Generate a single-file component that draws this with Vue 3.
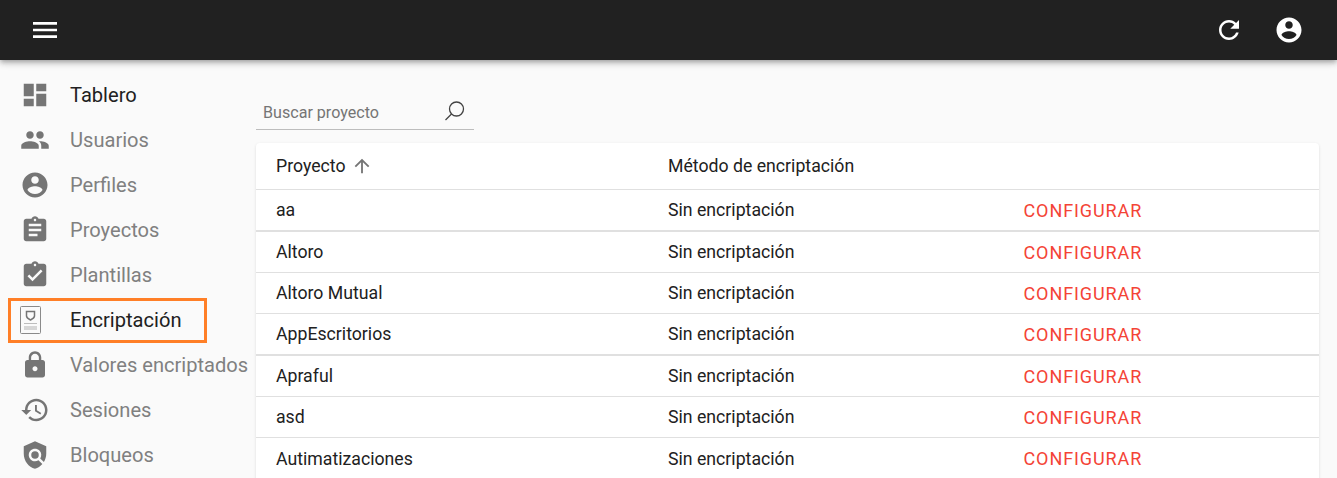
<script setup>
const menuItems = [
  { label: 'Tablero', active: true, paths: ['M3 13h8V3H3v10zm0 8h8v-6H3v6zm10 0h8V11h-8v10zm0-18v6h8V3h-8z'] },
  { label: 'Usuarios', paths: ['M16 11c1.66 0 2.99-1.34 2.99-3S17.66 5 16 5c-1.66 0-3 1.34-3 3s1.34 3 3 3zm-8 0c1.66 0 2.99-1.34 2.99-3S9.66 5 8 5C6.34 5 5 6.34 5 8s1.34 3 3 3zm0 2c-2.33 0-7 1.17-7 3.5V19h14v-2.5c0-2.33-4.67-3.5-7-3.5zm8 0c-.29 0-.62.02-.97.05 1.16.84 1.97 1.97 1.97 3.45V19h6v-2.5c0-2.33-4.67-3.5-7-3.5z'] },
  { label: 'Perfiles', paths: ['M12 2C6.48 2 2 6.48 2 12s4.48 10 10 10 10-4.48 10-10S17.52 2 12 2zm0 3c1.66 0 3 1.34 3 3s-1.34 3-3 3-3-1.34-3-3 1.34-3 3-3zm0 14.2c-2.5 0-4.71-1.28-6-3.22.03-1.99 4-3.08 6-3.08 1.99 0 5.97 1.09 6 3.08-1.29 1.94-3.5 3.22-6 3.22z'] },
  { label: 'Proyectos', paths: ['M19 3h-4.18C14.4 1.84 13.3 1 12 1c-1.3 0-2.4.84-2.82 2H5c-1.1 0-2 .9-2 2v14c0 1.1.9 2 2 2h14c1.1 0 2-.9 2-2V5c0-1.1-.9-2-2-2zm-7 0c.55 0 1 .45 1 1s-.45 1-1 1-1-.45-1-1 .45-1 1-1zm2 14H7v-2h7v2zm3-4H7v-2h10v2zm0-4H7V7h10v2z'] },
  { label: 'Plantillas', paths: ['M19 3h-4.18C14.4 1.84 13.3 1 12 1c-1.3 0-2.4.84-2.82 2H5c-1.1 0-2 .9-2 2v14c0 1.1.9 2 2 2h14c1.1 0 2-.9 2-2V5c0-1.1-.9-2-2-2zm-7 0c.55 0 1 .45 1 1s-.45 1-1 1-1-.45-1-1 .45-1 1-1zm-2 14l-4-4 1.41-1.41L10 14.17l6.59-6.59L18 9l-8 8z'] },
  { label: 'Encriptación', active: true, highlighted: true, custom: true },
  { label: 'Valores encriptados', paths: ['M18 8h-1V6c0-2.76-2.24-5-5-5S7 3.24 7 6v2H6c-1.1 0-2 .9-2 2v10c0 1.1.9 2 2 2h12c1.1 0 2-.9 2-2V10c0-1.1-.9-2-2-2zm-6 9c-1.1 0-2-.9-2-2s.9-2 2-2 2 .9 2 2-.9 2-2 2zm3.1-9H8.9V6c0-1.71 1.39-3.1 3.1-3.1 1.71 0 3.1 1.39 3.1 3.1v2z'] },
  { label: 'Sesiones', paths: ['M13 3c-4.97 0-9 4.03-9 9H1l3.89 3.89.07.14L9 12H6c0-3.87 3.13-7 7-7s7 3.13 7 7-3.13 7-7 7c-1.93 0-3.68-.79-4.94-2.06l-1.42 1.42C8.27 19.99 10.51 21 13 21c4.97 0 9-4.03 9-9s-4.03-9-9-9zm-1 5v5l4.28 2.54.72-1.21-3.5-2.08V8H12z'] },
  { label: 'Bloqueos', paths: ['M21 5l-9-4-9 4v6c0 5.55 3.84 10.74 9 12 2.3-.56 4.33-1.9 5.88-3.71l-3.12-3.12c-1.94 1.29-4.58 1.07-6.29-.64-1.95-1.95-1.95-5.12 0-7.07 1.95-1.95 5.12-1.95 7.07 0 1.71 1.71 1.92 4.35.64 6.29l2.9 2.9C20.29 15.69 21 13.38 21 11V5z', 'M12 9a3 3 0 1 0 0 6 3 3 0 0 0 0-6z'] }
]

const projects = ['aa', 'Altoro', 'Altoro Mutual', 'AppEscritorios', 'Apraful', 'asd', 'Autimatizaciones']
</script>

<template>
  <div class="page">
    <header class="topbar">
      <svg class="bar-icon menu-btn" viewBox="0 0 24 24"><path d="M3 18h18v-2H3v2zm0-5h18v-2H3v2zm0-7v2h18V6H3z" /></svg>
      <div class="bar-right">
        <svg class="bar-icon" viewBox="0 0 24 24"><path d="M17.65 6.35C16.2 4.9 14.21 4 12 4c-4.42 0-7.99 3.58-7.99 8s3.57 8 7.99 8c3.73 0 6.84-2.55 7.73-6h-2.08c-.82 2.33-3.04 4-5.65 4-3.31 0-6-2.69-6-6s2.69-6 6-6c1.66 0 3.14.69 4.22 1.78L13 11h7V4l-2.35 2.35z" /></svg>
        <svg class="bar-icon" viewBox="0 0 24 24"><path d="M12 2C6.48 2 2 6.48 2 12s4.48 10 10 10 10-4.48 10-10S17.52 2 12 2zm0 3c1.66 0 3 1.34 3 3s-1.34 3-3 3-3-1.34-3-3 1.34-3 3-3zm0 14.2c-2.5 0-4.71-1.28-6-3.22.03-1.99 4-3.08 6-3.08 1.99 0 5.97 1.09 6 3.08-1.29 1.94-3.5 3.22-6 3.22z" /></svg>
      </div>
    </header>

    <div class="body">
      <nav class="sidebar">
        <a v-for="item in menuItems" :key="item.label" class="nav-item" :class="{ active: item.active, highlighted: item.highlighted }">
          <span class="nav-icon">
            <svg v-if="item.custom" class="doc-icon" viewBox="0 0 21 28">
              <rect x="0.5" y="0.5" width="20" height="27" rx="1" fill="#fafafa" stroke="#8a8a8a" />
              <path d="M6.5 5.5h8v4.5c0 1.6-2 3-4 4-2-1-4-2.4-4-4z" fill="none" stroke="#757575" stroke-width="1.5" />
              <rect x="4" y="17" width="13" height="1" fill="#bdbdbd" />
              <rect x="4" y="20" width="13" height="4" fill="#d6d6d6" />
            </svg>
            <svg v-else viewBox="0 0 24 24"><path v-for="d in item.paths" :key="d" :d="d" /></svg>
          </span>
          <span class="nav-label">{{ item.label }}</span>
        </a>
      </nav>

      <main class="content">
        <div class="search">
          <span class="search-text">Buscar proyecto</span>
          <svg class="search-icon" viewBox="0 0 22 22" fill="none" stroke="#424242" stroke-width="1.3">
            <circle cx="12.5" cy="9" r="7" />
            <path d="M7.5 14 1.5 20" />
          </svg>
        </div>

        <section class="card">
          <div class="row head">
            <div class="col-name">
              Proyecto
              <svg class="sort-icon" viewBox="0 0 24 24"><path d="M4 12l1.41 1.41L11 7.83V20h2V7.83l5.58 5.59L20 12l-8-8-8 8z" /></svg>
            </div>
            <div class="col-method">Método de encriptación</div>
          </div>
          <div v-for="name in projects" :key="name" class="row">
            <div class="col-name">{{ name }}</div>
            <div class="col-method">Sin encriptación</div>
            <div class="col-action">CONFIGURAR</div>
          </div>
        </section>
      </main>
    </div>
  </div>
</template>

<style scoped>
.page {
  height: 478px;
  overflow: hidden;
  background: #fafafa;
  font-family: Roboto, "Liberation Sans", sans-serif;
  color: #212121;
}
.topbar {
  position: relative;
  z-index: 2;
  height: 60px;
  display: flex;
  align-items: center;
  justify-content: space-between;
  padding: 0 33px 0 29px;
  background: #212121;
  box-shadow: 0 2px 4px -1px rgba(0, 0, 0, .2), 0 4px 5px rgba(0, 0, 0, .14), 0 1px 10px rgba(0, 0, 0, .12);
}
.bar-icon {
  display: block;
  width: 30px;
  height: 30px;
  fill: #fff;
}
.menu-btn {
  width: 32px;
  height: 32px;
}
.bar-right {
  display: flex;
  gap: 30px;
}
.body {
  display: flex;
}
.sidebar {
  flex: 0 0 256px;
  padding-top: 12.5px;
}
.nav-item {
  position: relative;
  height: 45px;
  display: flex;
  align-items: center;
  font-size: 20.1px;
  color: #808080;
  white-space: nowrap;
}
.nav-item.active {
  color: #212121;
}
.nav-item.highlighted::after {
  content: '';
  position: absolute;
  left: 8px;
  top: 0;
  width: 199px;
  height: 45px;
  box-sizing: border-box;
  border: 3px solid #ff7f27;
}
.nav-icon {
  flex: 0 0 70px;
  display: flex;
  justify-content: center;
}
.nav-icon svg {
  display: block;
  width: 30px;
  height: 30px;
  fill: #757575;
}
.nav-icon svg.doc-icon {
  width: 21px;
  height: 28px;
  margin-right: 9px;
}
.content {
  flex: 1;
  padding: 0 18px 0 0;
}
.search {
  width: 218px;
  height: 70px;
  box-sizing: border-box;
  display: flex;
  align-items: flex-end;
  justify-content: space-between;
  padding: 0 8px 7px 7px;
  border-bottom: 1px solid #bdbdbd;
}
.search-text {
  font-size: 16.1px;
  line-height: 19px;
  color: #757575;
}
.search-icon {
  width: 22px;
  height: 22px;
}
.card {
  margin-top: 13px;
  padding-bottom: 20px;
  background: #fff;
  border-radius: 4px;
  box-shadow: 0 1px 3px rgba(0, 0, 0, .12);
}
.row {
  height: 41px;
  box-sizing: border-box;
  display: flex;
  align-items: center;
  padding-left: 20px;
  font-size: 17.7px;
  border-bottom: 1px solid #e0e0e0;
}
.row.head {
  height: 47px;
}
.row:nth-child(2),
.row:nth-child(5) {
  height: 42px;
  border-bottom-width: 2px;
}
.row:last-child {
  border-bottom: 0;
}
.col-name {
  flex: 0 0 392px;
  display: flex;
  align-items: center;
}
.col-method {
  flex: 0 0 355.5px;
}
.col-action {
  font-size: 18px;
  letter-spacing: .9px;
  color: #f44336;
}
.sort-icon {
  width: 22px;
  height: 22px;
  margin-left: 5px;
  fill: #757575;
}
</style>

<style>
body {
  overflow: hidden;
}
</style>
